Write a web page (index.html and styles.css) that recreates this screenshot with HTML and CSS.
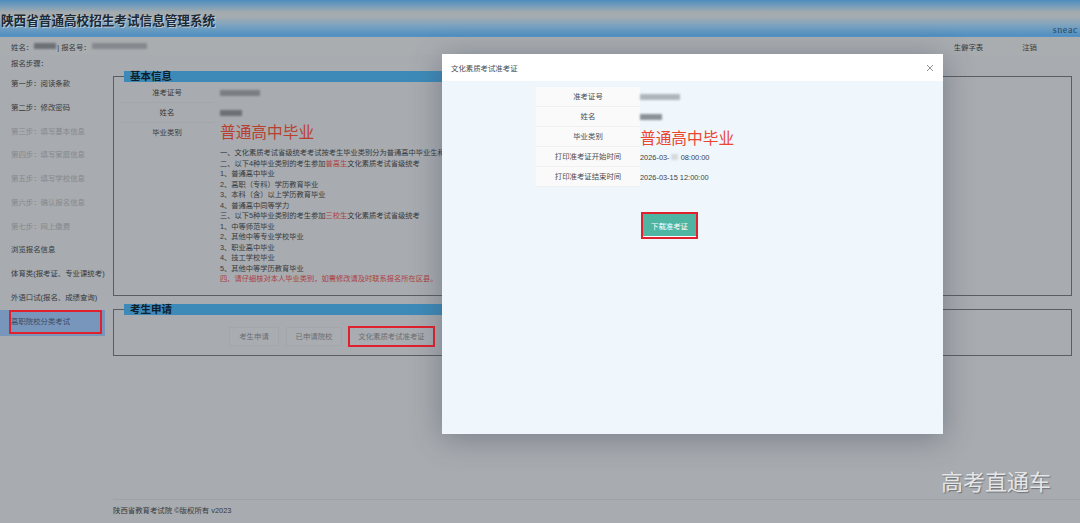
FILE: index.html
```html
<!DOCTYPE html>
<html lang="zh-CN">
<head>
<meta charset="utf-8">
<title>陕西省普通高校招生考试信息管理系统</title>
<link rel="stylesheet" href="styles.css">
</head>
<body>
<div class="page">
  <header class="banner">
    <h1 class="site-title">陕西省普通高校招生考试信息管理系统</h1>
    <span class="brand">sneac</span>
  </header>
  <div class="userbar">
    <div class="who">姓名&#65306;<i class="mask m-name"></i> | 报名号&#65306;<i class="mask m-num"></i></div>
    <nav class="userlinks"><a>生僻字表</a><a>注销</a></nav>
  </div>
  <div class="content">
    <aside class="side">
      <div class="side-title">报名步骤&#65306;</div>
      <a class="step">第一步&#65306;阅读条款</a>
      <a class="step">第二步&#65306;修改密码</a>
      <a class="step off">第三步&#65306;填写基本信息</a>
      <a class="step off">第四步&#65306;填写家庭信息</a>
      <a class="step off">第五步&#65306;填写学校信息</a>
      <a class="step off">第六步&#65306;确认报名信息</a>
      <a class="step off">第七步&#65306;网上缴费</a>
      <a class="step">浏览报名信息</a>
      <a class="step">体育类(报考证、专业课统考)</a>
      <a class="step">外语口试(报名、成绩查询)</a>
      <a class="step active">高职院校分类考试<span class="mark mark-side"></span></a>
    </aside>
    <main class="main">
      <fieldset class="box box-info">
        <legend class="box-title">基本信息</legend>
        <div class="info-rows">
          <div class="info-row"><div class="info-label">准考证号</div><div class="info-val"><i class="mask m-id"></i></div></div>
          <div class="info-row"><div class="info-label">姓名</div><div class="info-val"><i class="mask m-short"></i></div></div>
          <div class="info-row"><div class="info-label">毕业类别</div><div class="info-val big">普通高中毕业</div></div>
        </div>
        <div class="notes">
          <p>一、文化素质考试省级统考考试按考生毕业类别分为普通高中毕业生和三校生</p>
          <p>二、以下4种毕业类别的考生参加<em>普高生</em>文化素质考试省级统考</p>
          <p>1、普通高中毕业</p>
          <p>2、高职&#65288;专科&#65289;学历教育毕业</p>
          <p>3、本科&#65288;含&#65289;以上学历教育毕业</p>
          <p>4、普通高中同等学力</p>
          <p>三、以下5种毕业类别的考生参加<em>三校生</em>文化素质考试省级统考</p>
          <p>1、中等师范毕业</p>
          <p>2、其他中等专业学校毕业</p>
          <p>3、职业高中毕业</p>
          <p>4、技工学校毕业</p>
          <p>5、其他中等学历教育毕业</p>
          <p class="warn">四、请仔细核对本人毕业类别&#65292;如需修改请及时联系报名所在区县。</p>
        </div>
      </fieldset>
      <fieldset class="box box-apply">
        <legend class="box-title">考生申请</legend>
        <div class="actions">
          <button class="btn b1">考生申请</button>
          <button class="btn b2">已申请院校</button>
          <button class="btn b3">文化素质考试准考证<span class="mark mark-btn"></span></button>
        </div>
      </fieldset>
    </main>
  </div>
  <footer class="foot">陕西省教育考试院 ©版权所有 v2023</footer>

  <section class="modal">
    <div class="modal-head">
      <span>文化素质考试准考证</span>
      <svg class="close" viewBox="0 0 8 8" width="8" height="8"><path d="M1 1L7 7M7 1L1 7" stroke="#6f7478" stroke-width=".8" fill="none"/></svg>
    </div>
    <div class="modal-body">
      <div class="ticket">
        <div class="t-row"><div class="t-label">准考证号</div><div class="t-val"><i class="mask m-mid"></i></div></div>
        <div class="t-row"><div class="t-label">姓名</div><div class="t-val"><i class="mask m-tiny"></i></div></div>
        <div class="t-row"><div class="t-label">毕业类别</div><div class="t-val big-m">普通高中毕业</div></div>
        <div class="t-row"><div class="t-label">打印准考证开始时间</div><div class="t-val">2026-03-<i class="mask m-day"></i> 08:00:00</div></div>
        <div class="t-row"><div class="t-label">打印准考证结束时间</div><div class="t-val">2026-03-15 12:00:00</div></div>
      </div>
      <div class="dl-wrap"><button class="dl">下载准考证</button></div>
    </div>
  </section>
  <div class="watermark">高考直通车</div>
</div>
</body>
</html>
```

FILE: styles.css
```css
* { box-sizing: border-box; }
html, body { margin: 0; padding: 0; }
body {
  width: 1080px; height: 523px; overflow: hidden;
  font-family: "Liberation Sans", "Noto Sans CJK SC", sans-serif;
  font-size: 7.4px; color: #36393c; background: #a8abaf;
}
.page { position: relative; width: 1080px; height: 523px; display: flex; flex-direction: column; overflow: hidden; }
i { font-style: normal; }
em { font-style: normal; color: #b0413f; }

.banner {
  height: 37px; flex: none; display: flex; justify-content: space-between; align-items: flex-end;
  background: linear-gradient(#4f8dbd 0, #6f9bbd 5px, #a3abaf 12px, #a5acb0 17px, #7da3bf 25px, #4f8fc2 36px, #5a97c6 37px);
}
.site-title {
  margin: 0 0 4px 1px; font-size: 12.6px; line-height: 24px; font-weight: 700; color: #1c2a36;
  text-shadow: 1px 1px 0 rgba(230, 236, 240, .55);
}
.brand { margin: 0 2px 2px 0; font: 10px "Liberation Serif", serif; letter-spacing: .6px; color: #2a4a68; }

.userbar {
  height: 18px; flex: none; padding: 0 43px 0 11px; display: flex; justify-content: space-between; align-items: center;
  background: #a9adb0;
}
.userlinks { display: flex; gap: 39px; }
.who { display: flex; align-items: center; gap: 1px; }

.mask { display: inline-block; height: 6px; background: #62676c; filter: blur(1.3px); opacity: .85; }
.m-name { width: 22px; }
.m-num { width: 55px; opacity: .5; }
.m-id { width: 40px; opacity: .65; }
.m-short { width: 22px; }
.m-mid { width: 40px; opacity: .45; }
.m-tiny { width: 22px; opacity: .7; }
.m-day { width: 7px; background: #cfd3d8; opacity: .8; }

.content { flex: 1; display: flex; min-height: 0; }
.side { width: 113px; flex: none; padding: 5px 0 0 0; }
.side-title { height: 12px; line-height: 8px; padding-left: 11px; }
.step { position: relative; display: block; height: 23.75px; line-height: 23.75px; padding-left: 11px; white-space: nowrap; }
.step.off { color: #85888c; }
.step.active { width: 105px; height: 26px; background: #7896bc; color: #3f4a5c; }

.mark { position: absolute; border: 2px solid #e0202c; }
.mark-side { left: 9px; top: 0; width: 93px; height: 24px; }
.mark-btn { left: -2px; top: -2px; right: -2px; bottom: -2px; }

.main { flex: 1; padding: 16px 8px 0 0; min-width: 0; }
.box { margin: 0; padding: 0 0 0 6px; border: 1px solid #5a5d61; min-width: 0; }
.box-title {
  display: block; width: 640px; height: 11px; margin-left: 4px; padding: 0 0 0 6px;
  line-height: 11px; font-size: 10.5px; font-weight: 700; color: #10202c; background: #3d8ab8;
}
.box-info { height: 225px; }
.box-apply { height: 52px; margin-top: 8px; }

.info-rows { padding-top: 1px; }
.info-row { display: flex; height: 20px; align-items: center; }
.info-label { width: 94px; text-align: center; align-self: stretch; line-height: 20px; border-bottom: 1px solid #a2a5a9; margin-right: 6px; }
.info-row:last-child .info-label { border-bottom: 0; }
.big { font-size: 15.7px; color: #b9402f; line-height: 22px; }
.notes { margin: 5px 0 0 100px; white-space: nowrap; line-height: 10.5px; font-size: 7.25px; }
.notes p { margin: 0; height: 10.5px; }
.notes .warn { color: #ad3f3f; }

.actions { display: flex; gap: 7px; padding: 12px 0 0 109px; }
.btn {
  position: relative; height: 19px; padding: 0; border: 1px solid #a3a6aa; background: #a9acb0;
  color: #6c6f73; font: inherit; line-height: 17px;
}
.b1 { width: 50px; }
.b2 { width: 56px; }
.b3 { width: 85px; }

.foot {
  flex: none; height: 24px; margin-left: 113px; border-top: 1px solid #9fa2a6;
  line-height: 21px; font-size: 7.4px;
}

.modal {
  position: absolute; left: 442px; top: 54px; width: 501px; height: 380px;
  display: flex; flex-direction: column; background: #eff7fd;
  box-shadow: 0 4px 28px rgba(60, 70, 95, .45);
}
.modal-head {
  height: 27px; flex: none; padding: 0 9px; display: flex; justify-content: space-between; align-items: center;
  background: #fff; color: #4a4d50;
}
.modal-body { flex: 1; display: flex; flex-direction: column; padding: 6px 0 0 94px; }
.ticket { display: flex; flex-direction: column; }
.t-row { display: flex; height: 20px; align-items: center; }
.t-label { width: 104px; align-self: stretch; text-align: center; line-height: 20px; background: #fafafa; border-bottom: 1px solid #eef0f2; color: #4a4d50; }
.t-val { color: #3f4246; display: flex; align-items: center; gap: 1px; white-space: pre; }
.big-m { font-size: 15.7px; color: #ea4630; }
.dl-wrap { padding: 25px 0 0 105px; }
.dl {
  width: 57px; height: 27px; padding: 0; border: 2px solid #e0202c;
  background: #4fb5a3; color: #fff; font: inherit; box-shadow: inset 0 -1px 0 #fff;
}

.watermark {
  position: absolute; left: 941px; top: 468px; font-size: 22px; line-height: 30px; color: #e4e6e8;
  text-shadow: 1px 1px 1px #6f7276;
}
```
